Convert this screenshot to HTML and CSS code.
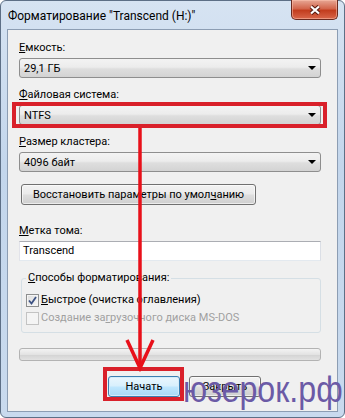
FILE: index.html
```html
<!DOCTYPE html>
<html lang="ru">
  <head>
    <meta charset="UTF-8" />
    <title>Форматирование</title>
    <link rel="stylesheet" href="styles.css">
  </head>
  <body>
    <div class="window">
      <div class="titlebar">
        <span class="title">Форматирование "Transcend (H:)"</span>
        <span class="close">
          <svg width="12" height="10" viewBox="0 0 12 10">
            <path d="M2 1.5 L10 8.5 M10 1.5 L2 8.5" stroke="#5a1c12" stroke-width="4.2" fill="none" />
            <path d="M2 1.5 L10 8.5 M10 1.5 L2 8.5" stroke="#ffffff" stroke-width="2.2" fill="none" />
          </svg>
        </span>
      </div>

      <div class="client">
        <div class="label first"><u>Е</u>мкость:</div>
        <div class="combo">29,1 ГБ<span class="caret"></span></div>

        <div class="label"><u>Ф</u>айловая система:</div>
        <div class="combo marked">NTFS<span class="caret"></span></div>

        <div class="label"><u>Р</u>азмер кластера:</div>
        <div class="combo">4096 байт<span class="caret"></span></div>

        <button class="btn restore">Восстановить параметры по умол<u>ч</u>анию</button>

        <div class="label volume"><u>М</u>етка тома:</div>
        <div class="textbox">Transcend</div>

        <fieldset class="group">
          <legend><u>С</u>пособы форматирования:</legend>
          <div class="check"><span class="box checked">
            <svg width="9" height="9" viewBox="0 0 9 9"><path d="M1 4.5 L3.5 7.5 L8 1" stroke="#3d5283" stroke-width="1.8" fill="none" /></svg>
          </span><span><u>Б</u>ыстрое (очистка оглавления)</span></div>
          <div class="check disabled"><span class="box"></span><span>Создание за<u>г</u>рузочного диска MS-DOS</span></div>
        </fieldset>

        <div class="progress"></div>

        <div class="actions">
          <button class="btn default marked-btn">Начать</button>
          <button class="btn">Закрыть</button>
        </div>
      </div>

      <!-- annotation arrow -->
      <svg class="arrow" width="345" height="418" viewBox="0 0 345 418">
        <path d="M140 128 L140 366" stroke="#e8101a" stroke-width="3.5" fill="none" />
        <path d="M127 340 L140 368 L153 340" stroke="#e8101a" stroke-width="3.5" fill="none" />
      </svg>

      <div class="watermark">юзерок.рф</div>
    </div>
  </body>
</html>
```

FILE: styles.css
```css
* {
  box-sizing: border-box;
}

body {
  margin: 0;
  background: #ffffff;
  font-family: Roboto, "Noto Sans", sans-serif;
  font-size: 11px;
  color: #000;
}

.window {
  position: relative;
  width: 345px;
  height: 418px;
  display: flex;
  flex-direction: column;
  padding: 0 6px 5px 6px;
  background: linear-gradient(#d6e3f2, #c3d6ec 40%, #c9daee);
  border: 1px solid #5d6f86;
  border-radius: 6px;
}

.titlebar {
  height: 28px;
  display: flex;
  justify-content: space-between;
  align-items: flex-start;
}

.title {
  padding: 8px 0 0 1px;
  font-size: 12px;
  line-height: 14px;
}

.close {
  width: 47px;
  height: 20px;
  margin-top: -1px;
  display: flex;
  justify-content: center;
  align-items: center;
  border: 1px solid #6a2a1f;
  border-top: none;
  border-radius: 0 0 5px 5px;
  background: linear-gradient(#e7a795, #d3664c 45%, #c23d1e 55%, #d9664a);
  box-shadow: inset 0 0 0 1px rgba(255, 200, 180, 0.5);
}

.client {
  flex: 1;
  position: relative;
  padding: 11px 16px 0 11px;
  background: #f0f0f0;
  border: 1px solid #8c9db3;
}

.label {
  line-height: 14px;
  margin-top: 10px;
}

.label.first {
  margin-top: 0;
}

.combo {
  margin-top: 3px;
  height: 20px;
  padding: 0 4px 0 4px;
  display: flex;
  justify-content: space-between;
  align-items: center;
  border: 1px solid #8e8e8e;
  border-radius: 3px;
  background: linear-gradient(#f3f3f3, #ececec 45%, #dedede 55%, #d3d3d3);
}

.caret {
  width: 0;
  height: 0;
  border-left: 4px solid transparent;
  border-right: 4px solid transparent;
  border-top: 4px solid #000;
}

.marked,
.marked-btn {
  position: relative;
}

.marked::after {
  content: "";
  position: absolute;
  top: -4px;
  bottom: -4px;
  left: -8px;
  right: -7px;
  border: 4px solid #d9202a;
}

.btn {
  height: 21px;
  padding: 0;
  font: inherit;
  color: #000;
  border: 1px solid #707070;
  border-radius: 3px;
  background: linear-gradient(#f2f2f2, #ebebeb 45%, #dddddd 55%, #cfcfcf);
  box-shadow: inset 0 0 0 1px rgba(255, 255, 255, 0.6);
  white-space: nowrap;
}

.restore {
  display: block;
  margin: 12px 0 0 2px;
  width: 235px;
}

.label.volume {
  margin-top: 19px;
}

.textbox {
  margin-top: 3px;
  height: 20px;
  padding-left: 3px;
  line-height: 18px;
  background: #fff;
  border: 1px solid;
  border-color: #abadb3 #dbdfe6 #e3e9ef #e2e3ea;
}

.group {
  margin: 10px 0 0 2px;
  padding: 8px 4px 7px 4px;
  border: 1px solid #d5dfe5;
  border-radius: 3px;
}

.group legend {
  padding: 0 2px;
  line-height: 14px;
}

.check {
  display: flex;
  align-items: center;
  gap: 2px;
  line-height: 14px;
}

.check + .check {
  margin-top: 4px;
}

.box {
  width: 13px;
  height: 13px;
  display: flex;
  justify-content: center;
  align-items: center;
  border: 1px solid #8e8f8f;
  background: linear-gradient(135deg, #dcdcdc, #f8f8f8);
  box-shadow: inset 0 0 0 1px #f4f4f4;
}

.disabled {
  color: #a0a0a0;
}

.disabled .box {
  border-color: #c3c3c3;
  background: #f4f4f4;
  box-shadow: none;
}

.progress {
  margin-top: 15px;
  height: 13px;
  border: 1px solid #b3b3b3;
  border-radius: 3px;
  background: linear-gradient(#f3f3f3, #e3e3e3 50%, #d4d4d4 55%, #e2e2e2);
}

.actions {
  margin: 15px 0 0 89px;
  display: flex;
  gap: 9px;
}

.actions .btn {
  width: 72px;
}

.default {
  border-color: #3c7fb1;
  background: linear-gradient(#eaf6fd, #d9f0fc 45%, #bee6fd 55%, #a7d9f5);
  box-shadow: inset 0 0 0 1px #d4ecfa;
}

.marked-btn::after {
  content: "";
  position: absolute;
  top: -10px;
  bottom: -5px;
  left: -6px;
  right: -5px;
  border: 4px solid #d9202a;
}

.arrow {
  position: absolute;
  left: -1px;
  top: -1px;
  pointer-events: none;
}

.watermark {
  position: absolute;
  left: 182px;
  top: 369px;
  font-family: "Liberation Sans", sans-serif;
  font-size: 37px;
  line-height: 40px;
  color: #6b5aa6;
  transform: scaleX(0.87);
  transform-origin: left top;
  pointer-events: none;
}
```
